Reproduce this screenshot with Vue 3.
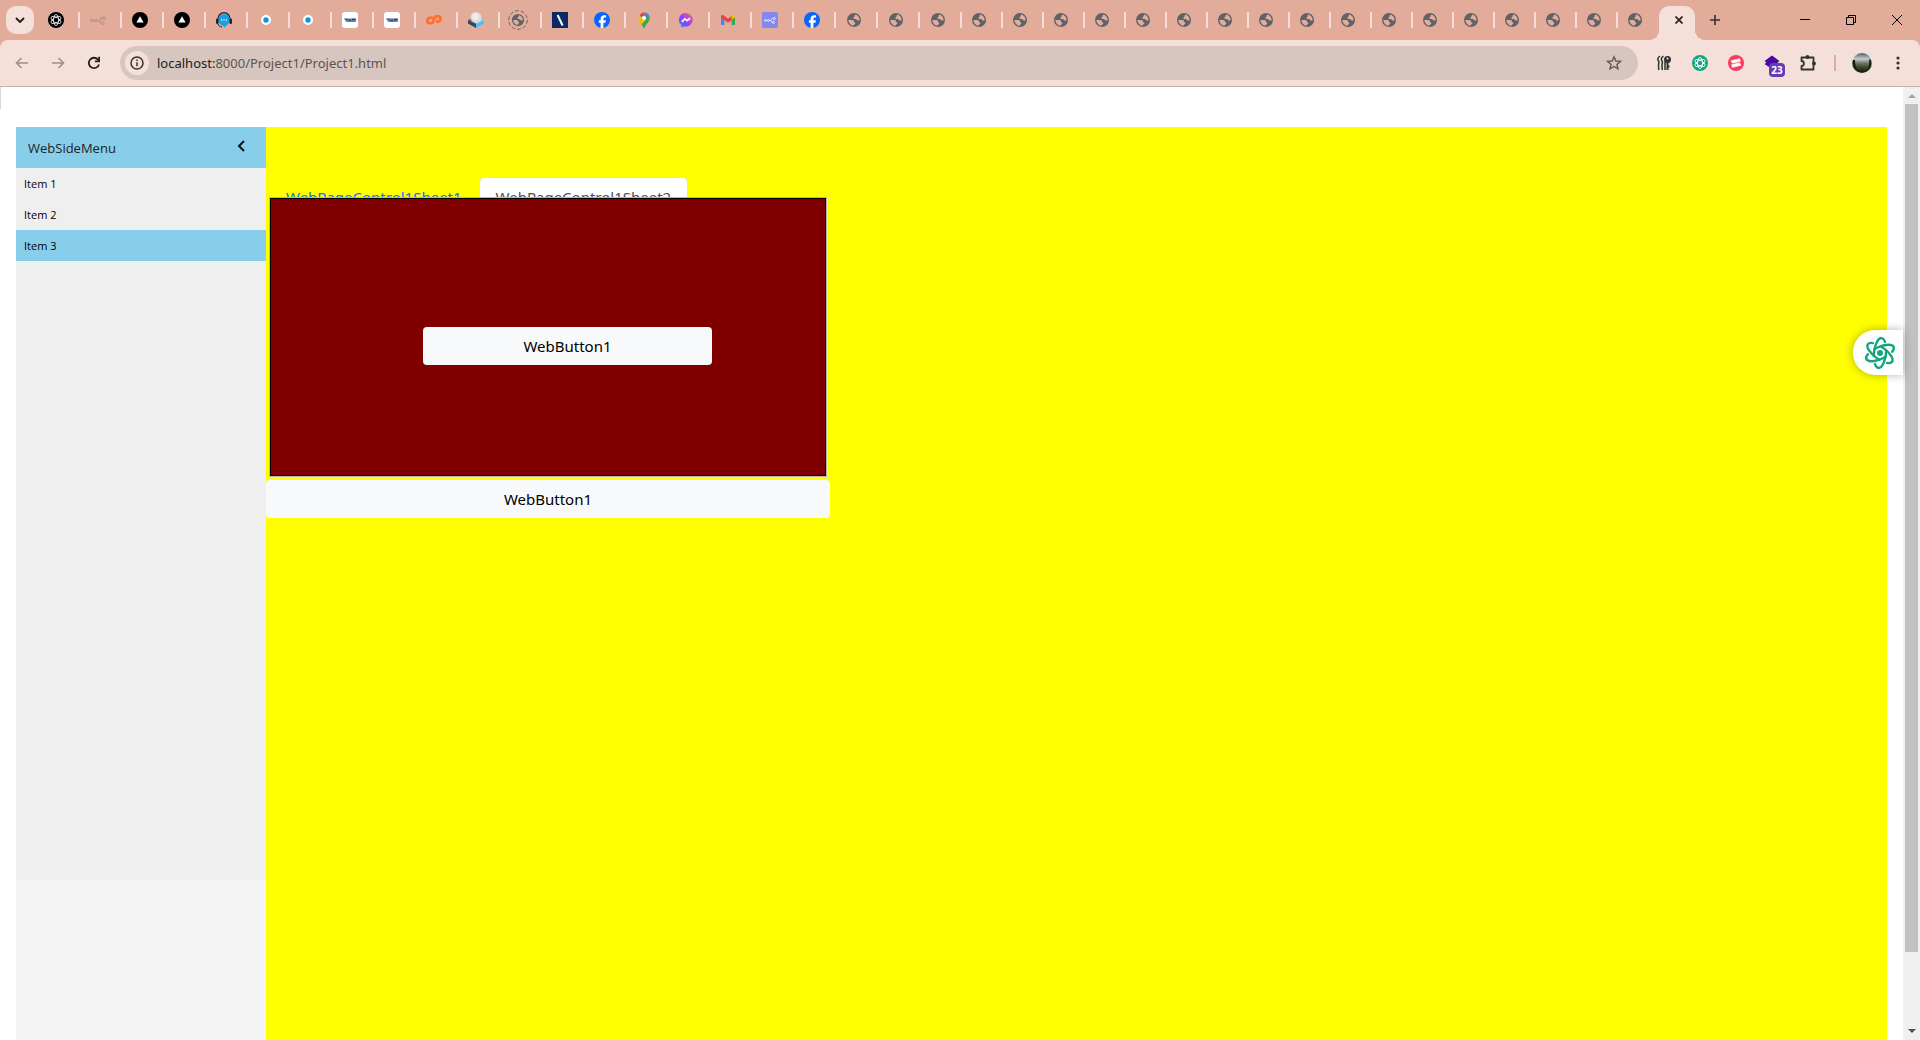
<template>
  <div class="browser">
    <svg class="sprite" aria-hidden="true">
      <defs>
        <linearGradient id="msg-grad" x1="0" y1="1" x2="1" y2="0">
          <stop offset="0" stop-color="#0a8cff" />
          <stop offset="0.45" stop-color="#9a3cff" />
          <stop offset="1" stop-color="#ff6a68" />
        </linearGradient>
        <linearGradient id="photo-grad" x1="0" y1="0" x2="0" y2="1">
          <stop offset="0" stop-color="#56605f" />
          <stop offset="0.3" stop-color="#c3cbcd" />
          <stop offset="0.5" stop-color="#6f7a70" />
          <stop offset="0.7" stop-color="#3d4a2a" />
          <stop offset="1" stop-color="#12160c" />
        </linearGradient>
      </defs>
      <symbol id="knot" viewBox="0 0 16 16">
        <g fill="none" stroke="currentColor" stroke-width="1.100">
          <ellipse
            v-for="n in 3"
            :key="n"
            cx="8"
            cy="8"
            rx="3.200"
            ry="6.800"
            :transform="`rotate(${n * 60} 8 8)`"
          />
        </g>
      </symbol>
      <symbol id="gpt" viewBox="0 0 16 16">
        <circle cx="8" cy="8" r="8" fill="#000" />
        <use href="#knot" x="1.500" y="1.500" width="13" height="13" color="#e8e8e8" />
      </symbol>
      <symbol id="flow" viewBox="0 0 16 16">
        <g fill="none" stroke="currentColor">
          <circle cx="1.700" cy="8.600" r="1.200" />
          <circle cx="6" cy="8.600" r="1.200" />
          <circle cx="13.800" cy="6" r="1.400" />
          <circle cx="12.600" cy="11.200" r="1.400" />
          <path d="M2.900 8.600h1.900M7.200 8.600h1.600c1.400 0 .8-2.600 2.200-2.600h1.400M8.800 8.600c1.400 0 .8 2.600 2.400 2.600" />
        </g>
      </symbol>
      <symbol id="flow-box" viewBox="0 0 16 16">
        <rect width="16" height="16" rx="2" fill="#8189ee" />
        <use href="#flow" x="2" y="2" width="12" height="12" color="#fff" />
      </symbol>
      <symbol id="vercel" viewBox="0 0 16 16">
        <circle cx="8" cy="8" r="8" fill="#000" />
        <path d="M8 4.200l3.600 6.400H4.400z" fill="#fff" />
      </symbol>
      <symbol id="headset" viewBox="0 0 16 16">
        <path d="M2 7a6 6.400 0 0 1 12 0" fill="none" stroke="#20242c" stroke-width="1.200" />
        <path d="M8 2a5.800 5.800 0 0 1 3.400 10.600L8.600 15.600 7 13.700A5.900 5.900 0 0 1 8 2z" fill="#199fe4" />
        <rect x="0" y="6.400" width="2.600" height="5.600" rx="1.200" fill="#20242c" />
        <rect x="13.400" y="6.400" width="2.600" height="5.600" rx="1.200" fill="#20242c" />
        <path d="M2 12c.4 1.800 1.800 2.800 4 3" fill="none" stroke="#20242c" />
        <g fill="#fff">
          <circle cx="5.600" cy="8" r="0.700" />
          <circle cx="8" cy="8" r="0.700" />
          <circle cx="10.400" cy="8" r="0.700" />
        </g>
      </symbol>
      <symbol id="dot" viewBox="0 0 16 16">
        <circle cx="8" cy="8" r="5" fill="#fff" />
        <circle cx="8" cy="8" r="2.700" fill="#0d96e0" />
      </symbol>
      <symbol id="badge" viewBox="0 0 16 16">
        <rect width="16" height="16" rx="3" fill="#fff" />
        <path d="M1.500 6.300h12.700v3.400H4z" fill="#8aa3c4" />
        <path d="M3.500 7.400h2M6.500 7.800h2.600M10 7.400h3.500M4.500 9h9" stroke="#28487c" stroke-width="1.100" />
      </symbol>
      <symbol id="cpanel" viewBox="0 0 16 16">
        <path
          d="M7 5.800H4a2.700 2.700 0 0 0 0 5.400h1.300c1 0 1.600-.6 1.900-1.600L8.500 6c.3-1 .9-1.600 1.900-1.600H12a2.600 2.600 0 0 1 0 5.200h-2"
          fill="none"
          stroke="#ff6c2c"
          stroke-width="2.600"
        />
      </symbol>
      <symbol id="cube" viewBox="0 0 16 16">
        <path d="M0 8l8 4v4l-8-4.400z" fill="#37474f" />
        <path d="M16 8l-8 4v4l8-4.400z" fill="#40c4ff" />
        <path d="M0 8l4-2 4 6z" fill="#546e7a" />
        <path d="M16 8l-4-2-4 6z" fill="#81d4fa" />
        <circle cx="8" cy="5.400" r="5.400" fill="#dcdcdc" />
        <circle cx="7.400" cy="4.600" r="3.600" fill="#ececec" />
      </symbol>
      <symbol id="globe" viewBox="0 0 16 16">
        <circle cx="8" cy="8" r="7" fill="#5f6368" />
        <path
          d="M9.300 2.600c2.500.6 4.300 2.800 4.300 5.400-.5.5-1.200.8-2 .5-.8-.3-.9-1.200-1.800-1.400C8.700 6.900 7.500 7 7.300 5.900c-.1-.9.9-.9 1.300-1.500.4-.6-.1-1.300.7-1.800z"
          fill="#e3ab99"
        />
        <path
          d="M2.400 8h3.400c1.500 0 2.300.7 2.300 1.700 0 .9 1.300.4 1.300 1.500 0 .9-1 .9-1.500 1.600v.9C4.900 13.600 2.600 11.200 2.400 8z"
          fill="#e3ab99"
        />
      </symbol>
      <symbol id="globe-ring" viewBox="0 0 20 20">
        <circle cx="10" cy="10" r="9.300" fill="none" stroke="#6b6462" stroke-dasharray="3.800 2" />
        <use href="#globe" x="3" y="3" width="14" height="14" />
      </symbol>
      <symbol id="slash" viewBox="0 0 16 16">
        <rect width="16" height="16" fill="#0b2a63" />
        <path d="M5.600 3l5 10.500" stroke="#fff" stroke-width="2" />
      </symbol>
      <symbol id="facebook" viewBox="0 0 16 16">
        <circle cx="8" cy="8" r="8" fill="#0866ff" />
        <path
          d="M6.600 16v-5.300H4.900V8.200h1.700V7.100c0-2.700 1.200-3.900 3.800-3.900.5 0 1.300.1 1.700.2v2.200h-.9c-1.300 0-1.800.5-1.800 1.700v.9h2.500l-.4 2.500H9.400V16z"
          fill="#fff"
        />
      </symbol>
      <symbol id="maps" viewBox="0 0 16 16">
        <path d="M3.500 3.500A5.700 5.700 0 0 1 9.700.6L5.600 5.500z" fill="#ea4335" />
        <path d="M9.700.6a5.700 5.700 0 0 1 3.500 2.900L9.900 7.400 6.200 4.600z" fill="#4285f4" />
        <path d="M3.500 3.500C2 5.600 2.200 7.900 3.500 10l6.400-7.200-3.400 4z" fill="#fbbc04" />
        <path d="M13.200 3.500c1.300 3 .2 5.200-1.700 7.500C9.900 13 9.300 13.700 9 15.300c-.3.900-1.600.9-1.900 0-.5-1.900-1.700-3.200-3.600-5.300l3.300-3.800z" fill="#34a853" />
        <path d="M3.500 10l3.300-3.800 3 1.200L5.600 12.400z" fill="#fbbc04" />
        <circle cx="8" cy="6" r="2.100" fill="#fff" />
      </symbol>
      <symbol id="messenger" viewBox="0 0 16 16">
        <path
          d="M8 1a7 6.800 0 1 1-1.900 13.400L3.400 15.200l-.1-2.200A6.800 6.800 0 0 1 8 1z"
          fill="url(#msg-grad)"
        />
        <path d="M3.900 9.800l2.900-3 2.300 1.900 3-2.600" fill="none" stroke="#fff" stroke-width="1.700" />
      </symbol>
      <symbol id="gmail" viewBox="0 0 16 16">
        <path d="M1 4.500l3.300 2.400V13H2a1 1 0 0 1-1-1z" fill="#4285f4" />
        <path d="M15 4.500l-3.300 2.400V13H14a1 1 0 0 0 1-1z" fill="#34a853" />
        <path d="M11.700 3.900l1-.7c1-.6 2.300 0 2.300 1.300v.9l-3.300 2.500z" fill="#fbbc04" />
        <path d="M1 4.500C1 3.200 2.300 2.600 3.300 3.200L8 6.700l3.700-2.800v4L8 10.700 4.300 7.900 1 5.400z" fill="#ea4335" />
      </symbol>
    </svg>

    <header class="tab-strip">
      <button class="tab-search" aria-label="Search tabs">
        <svg width="10" height="6" viewBox="0 0 10 6">
          <path d="M1 1l4 4 4-4" fill="none" stroke="#222" stroke-width="2" />
        </svg>
      </button>
      <nav class="tabs">
        <a
          v-for="(tab, i) in tabs"
          :key="i"
          href="#"
          class="tab"
          :class="{ narrow: i > 21, last: i === tabs.length - 1 }"
          :aria-label="tab"
        >
          <svg :class="['favicon', tab]"><use :href="`#${tab}`" /></svg>
        </a>
        <div class="tab-active">
          <button class="close-tab" aria-label="Close tab">
            <svg width="8" height="8" viewBox="0 0 8 8">
              <path d="M.5.5l7 7M7.500.5l-7 7" stroke="#222" stroke-width="1.700" />
            </svg>
          </button>
        </div>
        <button class="icon-btn new-tab" aria-label="New tab">
          <svg width="10" height="10" viewBox="0 0 10 10">
            <path d="M5 0v10M0 5h10" stroke="#333" stroke-width="1.600" />
          </svg>
        </button>
      </nav>
      <div class="window-buttons">
        <button class="icon-btn" aria-label="Minimize">
          <svg width="10" height="10" viewBox="0 0 10 10"><path d="M0 4.500h10" stroke="#000" /></svg>
        </button>
        <button class="icon-btn" aria-label="Restore">
          <svg width="10" height="10" viewBox="0 0 10 10">
            <path d="M.5 2.500h7v7h-7zM2.500 2V.5h7v7H8" fill="none" stroke="#000" />
          </svg>
        </button>
        <button class="icon-btn" aria-label="Close">
          <svg width="10" height="10" viewBox="0 0 10 10">
            <path d="M0 0l10 10M10 0L0 10" stroke="#000" />
          </svg>
        </button>
      </div>
    </header>

    <div class="toolbar">
      <div class="nav-buttons">
        <button class="icon-btn" aria-label="Back">
          <svg width="14" height="12" viewBox="0 0 14 12">
            <path d="M13 6H1.500M6.500 1l-5 5 5 5" fill="none" stroke="#9b908d" stroke-width="1.600" />
          </svg>
        </button>
        <button class="icon-btn" aria-label="Forward">
          <svg width="14" height="12" viewBox="0 0 14 12">
            <path d="M1 6h11.500M7.500 1l5 5-5 5" fill="none" stroke="#9b908d" stroke-width="1.600" />
          </svg>
        </button>
        <button class="icon-btn" aria-label="Reload">
          <svg width="14" height="14" viewBox="0 0 14 14">
            <path d="M12 8.500A5.200 5.200 0 1 1 11 3.600l1 1.200" fill="none" stroke="#222" stroke-width="1.800" />
            <path d="M12.100.8v4.600H7.900" fill="none" stroke="#222" stroke-width="1.800" />
          </svg>
        </button>
      </div>
      <div class="omnibox">
        <button class="site-info" aria-label="Site information">
          <svg width="14" height="14" viewBox="0 0 14 14">
            <circle cx="7" cy="7" r="6" fill="none" stroke="#333" stroke-width="1.500" />
            <path d="M7 6.200v4M7 3.500v1.500" stroke="#333" stroke-width="1.500" />
          </svg>
        </button>
        <a class="url" href="#"><span class="host">localhost:</span>8000/Project1/Project1.html</a>
        <button class="icon-btn star" aria-label="Bookmark">
          <svg width="16" height="16" viewBox="0 0 16 16">
            <path
              d="M8 1.800l1.800 4.200 4.600.4-3.500 3 1.100 4.500L8 11.500l-4 2.400 1.100-4.500-3.500-3 4.600-.4z"
              fill="none"
              stroke="#62585a"
              stroke-width="1.400"
            />
          </svg>
        </button>
      </div>
      <div class="extensions">
        <button class="icon-btn" aria-label="Keys">
          <svg width="14" height="16" viewBox="0 0 14 16">
            <path
              d="M3 1C0 3 .5 4.500 1.500 6s0 2.500 0 4.500 .5 2.500 0 4.500M6.500 1C3.500 3 4 4.500 5 6s0 2.500 0 4.500 .5 2.500 0 4.500M8 6.500v8.500"
              fill="none"
              stroke="#333"
              stroke-width="1.500"
            />
            <circle cx="10.500" cy="4.500" r="3.500" fill="#333" />
            <path d="M10.500 7v8M10.500 11.500h2" stroke="#333" stroke-width="2" />
            <circle cx="10.500" cy="3.500" r="1" fill="#f5e0d9" />
          </svg>
        </button>
        <button class="icon-btn" aria-label="Chat">
          <svg width="16" height="16" viewBox="0 0 16 16">
            <circle cx="8" cy="8" r="8" fill="#12a67e" />
            <use href="#knot" x="1.500" y="1.500" width="13" height="13" color="#fff" />
          </svg>
        </button>
        <button class="icon-btn" aria-label="Recorder">
          <svg width="16" height="16" viewBox="0 0 16 16">
            <circle cx="8" cy="8" r="8" fill="#fc3a5d" />
            <path
              d="M3 5.800L11.500 3.600 12.500 6.200 4.500 8.200zM3.500 9.800L11.500 7.800 13 10.200 4.500 12.400z"
              fill="#fff"
              stroke="#fff"
              stroke-width="0.600"
              stroke-linejoin="round"
            />
          </svg>
        </button>
        <button class="icon-btn counter" aria-label="Layers">
          <svg width="16" height="16" viewBox="0 0 16 16">
            <path d="M8 .5l7.500 5.500-2 1.500 2 1.500L8 14 .5 9l2-1.500-2-1.500z" fill="#4809a5" />
          </svg>
          <span class="count">23</span>
        </button>
        <button class="icon-btn" aria-label="Extensions">
          <svg width="18" height="18" viewBox="0 0 18 18">
            <path
              d="M2.500 3.500H14.500V15.500H2.500V12c3.200 0 3.200-5 0-5z"
              fill="none"
              stroke="#333"
              stroke-width="1.800"
              stroke-linejoin="round"
            />
            <circle cx="8.500" cy="3" r="1.900" fill="#333" />
            <circle cx="15" cy="9.500" r="1.900" fill="#333" />
          </svg>
        </button>
      </div>
      <span class="divider"></span>
      <button class="icon-btn" aria-label="Profile">
        <svg width="20" height="20" viewBox="0 0 20 20">
          <circle cx="10" cy="10" r="10" fill="url(#photo-grad)" />
          <path d="M1 7a9.500 9.500 0 0 0 5 11c-2-3-3-6-3-11zM17 6q1 7-2 12 5-4 4-11z" fill="#151a14" />
        </svg>
      </button>
      <button class="icon-btn" aria-label="Menu">
        <svg width="4" height="14" viewBox="0 0 4 14">
          <g fill="#333">
            <circle cx="2" cy="2" r="1.600" />
            <circle cx="2" cy="7" r="1.600" />
            <circle cx="2" cy="12" r="1.600" />
          </g>
        </svg>
      </button>
    </div>

    <div class="viewport">
      <span class="edge-mark"></span>
      <main class="page">
        <aside class="side">
          <div class="side-menu">
            <div class="side-header">
              <span>WebSideMenu</span>
              <button class="collapse" aria-label="Collapse menu">
                <svg width="8" height="12" viewBox="0 0 8 12">
                  <path d="M7 1L2 6l5 5" fill="none" stroke="#111" stroke-width="2" />
                </svg>
              </button>
            </div>
            <a
              v-for="item in items"
              :key="item"
              href="#"
              class="side-item"
              :class="{ selected: item === selected }"
              @click.prevent="selected = item"
            >{{ item }}</a>
          </div>
        </aside>
        <section class="content">
          <div class="sheet-tabs">
            <a href="#" class="sheet-tab">WebPageControl1Sheet1</a>
            <a href="#" class="sheet-tab current">WebPageControl1Sheet2</a>
          </div>
          <div class="sheet">
            <button class="web-button">WebButton1</button>
          </div>
          <button class="web-button wide">WebButton1</button>
        </section>
        <button class="assistant" aria-label="Assistant">
          <svg width="32" height="34" viewBox="0 0 32 34">
            <g fill="none" stroke="#12a67e" stroke-width="2.400" stroke-linecap="round">
              <ellipse
                v-for="n in 3"
                :key="n"
                cx="16"
                cy="17"
                rx="6"
                ry="15"
                pathLength="100"
                stroke-dasharray="38 12"
                stroke-dashoffset="5"
                :transform="`rotate(${n * 60 + 6} 16 17)`"
              />
            </g>
            <circle cx="16" cy="17" r="3" fill="#12a67e" />
          </svg>
        </button>
      </main>
      <div class="scrollbar">
        <svg width="8" height="4" viewBox="0 0 8 4"><path d="M0 4l4-4 4 4z" fill="#a3a3a3" /></svg>
        <span class="thumb"></span>
        <svg width="8" height="4" viewBox="0 0 8 4"><path d="M0 0l4 4 4-4z" fill="#505050" /></svg>
      </div>
    </div>
  </div>
</template>

<script setup>
import { ref } from "vue";

const tabs = [
  "gpt",
  "flow",
  "vercel",
  "vercel",
  "headset",
  "dot",
  "dot",
  "badge",
  "badge",
  "cpanel",
  "cube",
  "globe-ring",
  "slash",
  "facebook",
  "maps",
  "messenger",
  "gmail",
  "flow-box",
  "facebook",
  ...Array(20).fill("globe")
];

const items = ["Item 1", "Item 2", "Item 3"];
const selected = ref("Item 3");
</script>

<style>
body {
  margin: 0;
  background: #fff;
}
</style>

<style scoped>
.browser {
  display: flex;
  flex-direction: column;
  height: 100vh;
  overflow: hidden;
  background: #e3ab99;
  font-family: "Noto Sans", "Open Sans", sans-serif;
}

.browser * {
  box-sizing: border-box;
}

.sprite {
  position: absolute;
  width: 0;
  height: 0;
}

button {
  padding: 0;
  border: 0;
  background: none;
  font-family: inherit;
}

.icon-btn {
  display: flex;
  align-items: center;
  justify-content: center;
  flex: none;
  width: 36px;
  height: 36px;
}

/* tab strip */
.tab-strip {
  display: flex;
  align-items: center;
  flex: none;
  height: 40px;
}

.tab-search {
  display: flex;
  align-items: center;
  justify-content: center;
  flex: none;
  width: 28px;
  height: 28px;
  margin: 0 4px 0 6px;
  border-radius: 10px;
  background: #f5e0d9;
}

.tabs {
  display: flex;
  align-items: center;
  flex: 1;
  height: 40px;
}

.tab {
  display: flex;
  align-items: center;
  justify-content: center;
  flex: none;
  width: 42px;
  height: 16px;
  padding-right: 4px;
  border-right: 2px solid #f5e0d9;
}

.tab.narrow {
  width: 41px;
  padding-right: 5px;
}

.tab.last {
  border-color: transparent;
}

.favicon {
  flex: none;
  width: 16px;
  height: 16px;
}

.favicon.flow {
  color: #a8908a;
}

.favicon.globe-ring {
  width: 20px;
  height: 20px;
}

.tab-active {
  position: relative;
  display: flex;
  align-items: center;
  justify-content: center;
  align-self: flex-end;
  width: 36px;
  height: 34px;
  padding: 0 0 6px 4px;
  border-radius: 10px 10px 0 0;
  background: #f5e0d9;
}

.tab-active::before,
.tab-active::after {
  content: "";
  position: absolute;
  bottom: 0;
  width: 10px;
  height: 10px;
}

.tab-active::before {
  right: 100%;
  background: radial-gradient(circle at 0 0, transparent 10px, #f5e0d9 10px);
}

.tab-active::after {
  left: 100%;
  background: radial-gradient(circle at 100% 0, transparent 10px, #f5e0d9 10px);
}

.close-tab {
  display: flex;
}

.new-tab {
  margin-left: 2px;
}

.window-buttons {
  display: flex;
}

.window-buttons .icon-btn {
  width: 46px;
}

/* toolbar */
.toolbar {
  display: flex;
  align-items: center;
  flex: none;
  height: 47px;
  padding: 0 4px;
  border-bottom: 1px solid #c2b3ae;
  border-radius: 8px 8px 0 0;
  background: #f5e0d9;
}

.nav-buttons,
.extensions {
  display: flex;
}

.omnibox {
  display: flex;
  align-items: center;
  flex: 1;
  height: 34px;
  margin: 0 8px;
  padding: 0 6px 0 5px;
  border-radius: 17px;
  background: #d7c6bf;
}

.site-info {
  display: flex;
  align-items: center;
  justify-content: center;
  width: 24px;
  height: 24px;
  margin-right: 8px;
  border-radius: 12px;
  background: #f5e0d9;
}

.url {
  flex: 1;
  color: #5c5351;
  font-size: 13px;
  text-decoration: none;
}

.host {
  color: #222;
}

.counter {
  position: relative;
}

.count {
  position: absolute;
  top: 18px;
  left: 15px;
  width: 16px;
  height: 14px;
  border-radius: 4px;
  background: #673ab7;
  color: #fff;
  font-size: 10px;
  font-weight: 700;
  line-height: 14px;
  text-align: center;
}

.divider {
  width: 2px;
  height: 16px;
  margin: 0 8px;
  background: #e3ab99;
}

/* page */
.viewport {
  position: relative;
  display: flex;
  flex: 1;
  min-height: 0;
  background: #fff;
}

.edge-mark {
  position: absolute;
  top: 0;
  left: 0;
  width: 1px;
  height: 22px;
  background: #d8d8d8;
}

.page {
  position: relative;
  display: flex;
  flex: 1;
  padding: 40px 16px 0;
}

.side {
  flex: none;
  width: 250px;
  background: #f4f4f4;
}

.side-menu {
  height: calc(100vh - 287px);
  background: #efefef;
}

.side-header {
  display: flex;
  align-items: center;
  justify-content: space-between;
  height: 41px;
  padding: 0 21px 0 12px;
  background: #87ceeb;
  color: #222;
  font-family: "Open Sans", "Noto Sans", sans-serif;
  font-size: 13px;
}

.collapse {
  height: 20px;
  padding-bottom: 4px;
}

.side-item {
  display: block;
  padding: 0 8px;
  color: #000;
  font-family: "Open Sans", "Noto Sans", sans-serif;
  font-size: 11px;
  line-height: 31px;
  text-decoration: none;
}

.side-item.selected {
  background: #87ceeb;
}

.content {
  flex: 1;
  padding-top: 50px;
  background: #ff0;
}

.sheet-tabs {
  display: flex;
  margin-left: 3px;
}

.sheet-tab {
  height: 42px;
  padding: 7px 16px;
  border: 1px solid transparent;
  border-radius: 6px 6px 0 0;
  color: #0d6efd;
  font-size: 15px;
  line-height: 24px;
  text-decoration: none;
}

.sheet-tab.current {
  border-color: #dee2e6;
  background: #fff;
  color: #495057;
}

/* the sheet covers the lower half of the tab row */
.sheet {
  position: relative;
  width: 558px;
  height: 280px;
  margin: -22px 0 0 3px;
  padding: 129px 114px 0 153px;
  border: 1px solid #b8b8b8;
  background: maroon;
  box-shadow: inset 0 0 0 1px #000;
}

.web-button {
  display: block;
  width: 100%;
  height: 38px;
  border-radius: 4px;
  background: #f8f9fa;
  color: #000;
  font-size: 15px;
}

.web-button.wide {
  width: 564px;
  margin-top: 3px;
}

.assistant {
  position: absolute;
  top: 243px;
  right: 0;
  display: flex;
  align-items: center;
  width: 50px;
  height: 45px;
  padding-left: 11px;
  border-radius: 22px 0 0 22px;
  background: #fff;
  box-shadow: 0 0 10px rgba(0, 0, 0, 0.3);
}

.scrollbar {
  display: flex;
  flex-direction: column;
  align-items: center;
  justify-content: space-between;
  width: 17px;
  padding: 7px 2px;
  background: #f0f0f0;
}

.thumb {
  flex: 1;
  width: 13px;
  margin: 6px 0 77px;
  background: #c1c1c1;
}
</style>
